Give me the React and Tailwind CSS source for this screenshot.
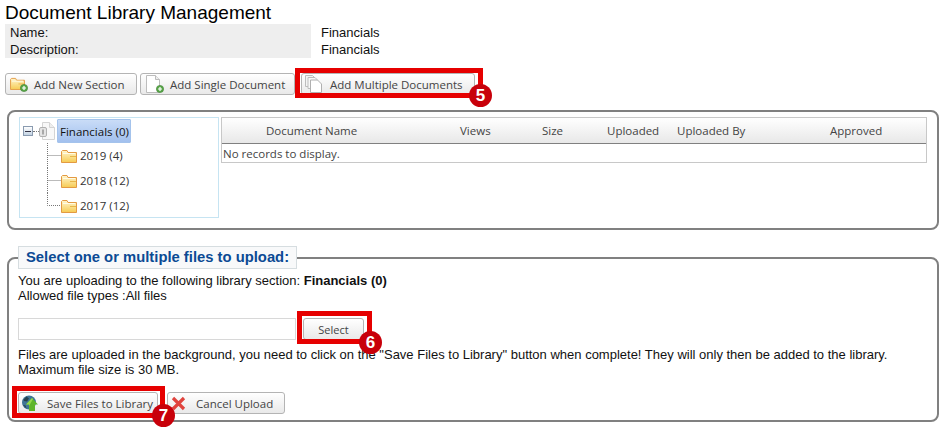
// Document library upload page
const ARIAL = "font-['Liberation_Sans',Arial,sans-serif]"
const SEGOE = "font-['Open_Sans',sans-serif]"

const COLUMNS = ['Document Name', 'Views', 'Size', 'Uploaded', 'Uploaded By', 'Approved']
const SECTIONS = [
  { label: '2019 (4)', last: false },
  { label: '2018 (12)', last: false },
  { label: '2017 (12)', last: true },
]

function FolderIcon({ className = 'w-4 h-[14px]' }) {
  return (
    <svg viewBox="0 0 16 14" className={className}>
      <defs>
        <linearGradient id="folderFill" x1="0" y1="0" x2="0" y2="1">
          <stop offset="0" stopColor="#fff6d0" />
          <stop offset="1" stopColor="#f6cb52" />
        </linearGradient>
      </defs>
      <path d="M.5 2.500v11h15v-10H7L6 1.500H1.500z" fill="url(#folderFill)" stroke="#e39a42" />
      <path d="M2 4.500h12" stroke="#fffbe6" />
      <path d="M9 7.500h6" stroke="#e8b64a" />
    </svg>
  )
}

function PlusDot() {
  return (
    <svg viewBox="0 0 8 8" className="absolute right-0 bottom-0 w-2 h-2">
      <circle cx="4" cy="4" r="3.6" fill="#5aa84a" stroke="#3d7f33" strokeWidth=".6" />
      <path d="M2 4h4M4 2v4" stroke="#fff" strokeWidth="1.2" />
    </svg>
  )
}

function PageIcon() {
  return (
    <svg viewBox="0 0 14 18" className="w-[14px] h-[18px]">
      <path d="M.5.500h9l4 4v13H.5z" fill="#fff" stroke="#bdbdbd" />
      <path d="M9.500.500v4h4" fill="#eee" stroke="#bdbdbd" />
    </svg>
  )
}

// grey page with a binder clip on its left edge, for the library root
function LibraryIcon() {
  return (
    <svg viewBox="0 0 16 18" className="w-4 h-[18px]">
      <path d="M3.500.500h7l5 5v12h-12z" fill="#f8f8f8" stroke="#d4d4d4" />
      <path d="M10.500.500v5h5" fill="#eee" stroke="#d4d4d4" />
      <rect x=".5" y="5.500" width="7" height="9" rx="1.500" fill="#e4e4e4" stroke="#b0b0b0" />
      <rect x="3" y="7.500" width="2" height="5" fill="#a8a8a8" />
    </svg>
  )
}

function PagesIcon() {
  return (
    <svg viewBox="0 0 17 18" className="w-[17px] h-[18px]">
      <path d="M.5.500h7l2 2v9h-9z" fill="#f4f4f4" stroke="#bcbcbc" />
      <path d="M3 2.500h7l2 2v9H3z" fill="#f8f8f8" stroke="#bcbcbc" />
      <path d="M5.500 5h7l4 4v8.500h-11z" fill="#fff" stroke="#b0b0b0" />
    </svg>
  )
}

function GlobeIcon() {
  return (
    <svg viewBox="0 0 16 16" className="w-4 h-4">
      <circle cx="7" cy="7.500" r="7" fill="#3f7596" />
      <path d="M1.500 4.500l3-3 2.500 2-2 3-3-.5zM1 10l2.500.5 1 3z" fill="#26414e" />
      <path d="M10 3l6 6.500h-3V16H7V9.500H4z" fill="#5fb52a" />
      <path d="M10 3L4 9.500h3V11l4-7z" fill="#93d94c" />
    </svg>
  )
}

function CrossIcon() {
  return (
    <svg viewBox="0 0 15 15" className="w-[15px] h-[15px]">
      <path d="M2 2l11 11M13 2L2 13" stroke="#e0443e" strokeWidth="3.2" />
    </svg>
  )
}

function Button({ icon, label, className = '', iconBox = 'w-[28px] pl-[4px]' }) {
  return (
    <button className={`flex items-center h-[22px] rounded-[3px] border border-[#b4b4b4] bg-gradient-to-b from-white to-[#e9e9e9] text-[11.5px] text-[#444] ${SEGOE} ${className}`}>
      <span className={`flex items-center shrink-0 ${iconBox}`}>{icon}</span>
      <span className="whitespace-nowrap">{label}</span>
    </button>
  )
}

// red annotation laid over a button, with its step number
function Callout({ n, className, badge }) {
  return (
    <div className={`absolute border-[5px] border-[#e60000] pointer-events-none ${className}`}>
      <span className={`absolute flex items-center justify-center w-[23px] h-[23px] rounded-full bg-[#c8000a] text-white text-[17px] font-bold ${ARIAL} ${badge}`}>{n}</span>
    </div>
  )
}

function TreeRow({ label, last }) {
  return (
    <div className="flex items-center h-[25px] pl-[27px]">
      <svg viewBox="0 0 14 25" className="w-[14px] h-[25px] shrink-0">
        <path d={last ? 'M.5 0v12.500h13' : 'M.5 0v25M.5 12.500h13'} stroke="#777" strokeDasharray="1 1" fill="none" />
      </svg>
      <FolderIcon />
      <span className="ml-[3px]">{label}</span>
    </div>
  )
}

export default function App() {
  return (
    <div className={`relative w-[948px] h-[432px] overflow-hidden bg-white text-[13px] leading-[15px] text-[#111] ${ARIAL}`}>
      <h1 className="pl-[5px] pt-px text-[19px] leading-[23px] text-black">Document Library Management</h1>

      <div className="ml-[5px] grid grid-cols-[306px_1fr] leading-[17px]">
        <div className="bg-[#eeeeee] pl-[5px]">Name:</div>
        <div className="pl-[10px]">Financials</div>
        <div className="bg-[#eeeeee] pl-[5px]">Description:</div>
        <div className="pl-[10px]">Financials</div>
      </div>

      <div className="flex mt-[15px] ml-[5px]">
        <Button
          className="w-[132px]"
          label="Add New Section"
          icon={<span className="relative flex w-[18px] h-4 pt-px"><FolderIcon className="w-[15px] h-[13px]" /><PlusDot /></span>}
        />
        <Button
          className="w-[155px] ml-[3px]"
          label="Add Single Document"
          iconBox="w-[29px] pl-[5px]"
          icon={<span className="relative flex w-[18px] h-[18px]"><PageIcon /><PlusDot /></span>}
        />
        <Button className="w-[174px] ml-[6px]" label="Add Multiple Documents" iconBox="w-[28px] pl-[3px]" icon={<PagesIcon />} />
      </div>

      <div className="flex gap-[2px] h-[120px] mt-[15px] mx-[7px] w-[932px] pl-[10px] pt-[5px] rounded-[8px] border-2 border-[#808080]">
        <div className={`w-[200px] h-[101px] border border-[#c6e4f2] text-[11.5px] text-[#333] ${SEGOE}`}>
          <div className="flex items-center h-[24px] pl-[3px] mt-px">
            <span className="flex items-center justify-center w-[10px] h-[10px] border border-[#8a9bb0] bg-gradient-to-b from-white to-[#c3d3e3]">
              <span className="w-[6px] h-px bg-[#334]" />
            </span>
            <span className="w-[6px] border-t border-dotted border-[#777]" />
            <LibraryIcon />
            <span className="ml-[2px] flex items-center w-[74px] h-[24px] pl-[2px] rounded-[1px] border border-[#a4c3ec] bg-gradient-to-b from-[#c9dcf7] to-[#a2c0ee] text-[#111]">Financials (0)</span>
          </div>
          {SECTIONS.map(s => <TreeRow key={s.label} label={s.label} last={s.last} />)}
        </div>

        <div className={`w-[706px] h-[46px] border border-[#c8c8c8] text-[11.5px] text-[#444] ${SEGOE}`}>
          <div className="grid grid-cols-[194px_82px_65px_70px_153px_1fr] items-center h-[26px] pl-[44px] border-b border-[#808080] bg-gradient-to-b from-white to-[#e8e8e8]">
            {COLUMNS.map(c => <span key={c}>{c}</span>)}
          </div>
          <div className="pl-px leading-[19px]">No records to display.</div>
        </div>
      </div>

      <fieldset className="mx-[7px] mt-[16px] w-[932px] h-[176px] rounded-[8px] border-2 border-[#808080] pl-[9px] pr-2">
        <legend className="w-[279px] h-[23px] pl-[7px] whitespace-nowrap border border-[#d6dde0] bg-[#f8f9fa] text-[14.8px] leading-[21px] font-bold text-[#0b4a94]">
          Select one or multiple files to upload:
        </legend>
        <div className="mt-[4px]">You are uploading to the following library section: <b>Financials (0)</b></div>
        <div>Allowed file types :All files</div>
        <div className="flex mt-[15px]">
          <div className="w-[278px] h-[22px] border border-[#d8d8d8] bg-white" />
          <button className={`ml-[7px] w-[61px] h-[22px] rounded-[3px] border border-[#b4b4b4] bg-gradient-to-b from-white to-[#e9e9e9] text-[11px] text-[#444] ${SEGOE}`}>Select</button>
        </div>
        <div className="mt-[7px]">Files are uploaded in the background, you need to click on the "Save Files to Library" button when complete! They will only then be added to the library.</div>
        <div>Maximum file size is 30 MB.</div>
        <div className="flex mt-[15px]">
          <Button className="w-[140px]" label="Save Files to Library" iconBox="w-[28px] pl-[3px]" icon={<GlobeIcon />} />
          <Button className="w-[118px] ml-[9px]" label="Cancel Upload" iconBox="w-[28px] pl-[3px]" icon={<CrossIcon />} />
        </div>
      </fieldset>

      <Callout n="5" className="left-[295px] top-[68px] w-[188px] h-[30px]" badge="left-[169px] top-[11px]" />
      <Callout n="6" className="left-[297px] top-[311px] w-[75px] h-[33px]" badge="left-[57px] top-[15px]" />
      <Callout n="7" className="left-[12px] top-[386px] w-[153px] h-[32px]" badge="left-[135px] top-[13px]" />
    </div>
  )
}
